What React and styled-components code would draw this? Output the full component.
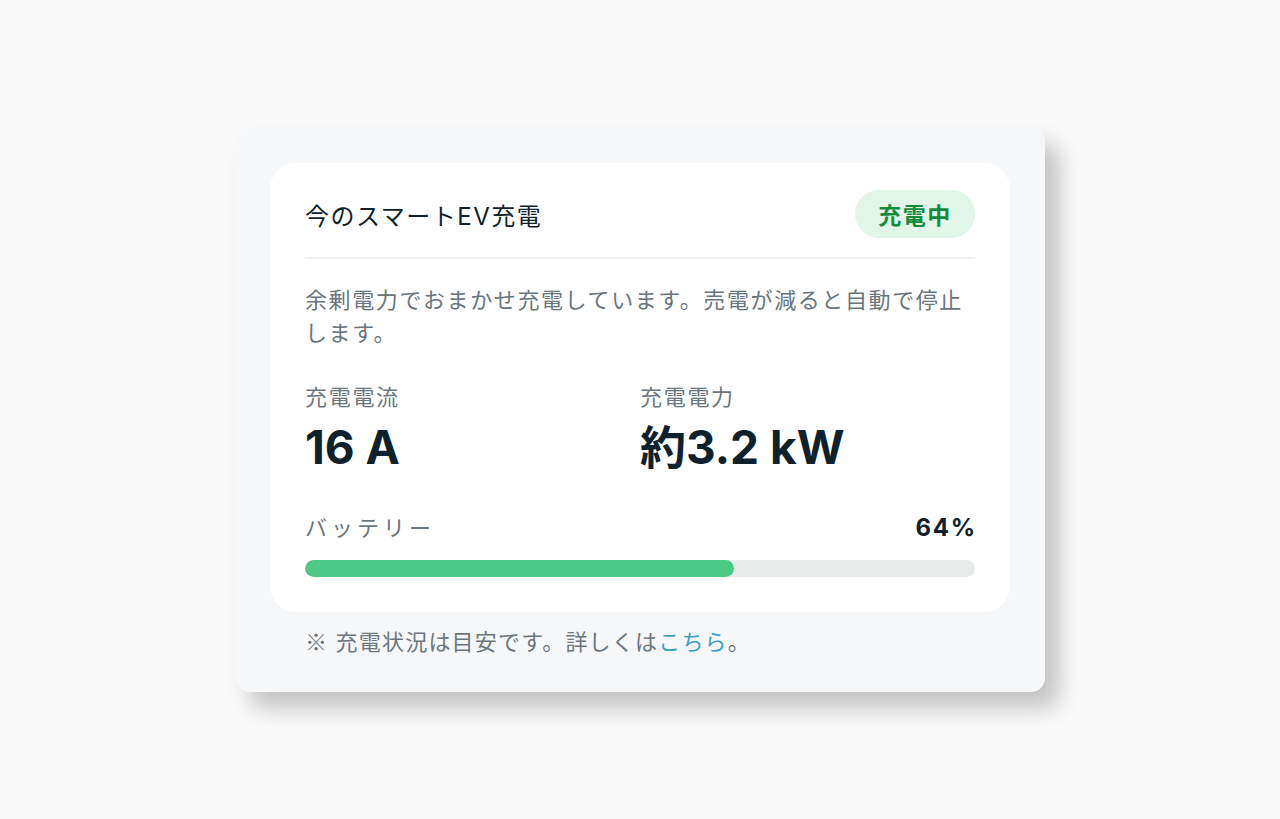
import React from "react";
import styled, { createGlobalStyle } from "styled-components";

const GlobalStyle = createGlobalStyle`
  html, body {
    margin: 0;
    padding: 0;
    background: #f9f9f9;
  }
  body {
    font-family: "Inter", "Noto Sans CJK JP", sans-serif;
  }
`;

const Page = styled.div`
  min-height: 819px;
  display: flex;
  align-items: flex-start;
  justify-content: center;
  padding-top: 128px;
  box-sizing: border-box;
`;

const Outer = styled.div`
  width: 809px;
  box-sizing: border-box;
  padding: 35px 35px 36px 34px;
  background: #f6f7f9;
  border-radius: 14px;
  box-shadow: 14px 16px 22px rgba(0, 0, 0, 0.22);
  margin-left: 1px;
`;

const Card = styled.div`
  background: #ffffff;
  border-radius: 26px;
  padding: 27px 35px 35px;
`;

const Header = styled.div`
  display: flex;
  align-items: center;
  justify-content: space-between;
  padding-bottom: 19px;
  border-bottom: 2px solid #eef0f1;
`;

const Title = styled.h2`
  margin: 0;
  font-size: 24px;
  font-weight: 400;
  color: #10212b;
  letter-spacing: 1.5px;
`;

const Badge = styled.span`
  display: inline-flex;
  align-items: center;
  justify-content: center;
  height: 48px;
  width: 120px;
  border-radius: 24px;
  background: #e1f5e8;
  color: #138a3c;
  font-size: 23px;
  font-weight: 700;
  letter-spacing: 1.5px;
`;

const Description = styled.p`
  margin: 25px 0 0;
  font-size: 22px;
  line-height: 33px;
  color: #69757d;
  letter-spacing: 1.6px;
`;

const Stats = styled.div`
  display: grid;
  grid-template-columns: 1fr 1fr;
  margin-top: 33px;
`;

const Stat = styled.div`
  display: flex;
  flex-direction: column;
`;

const Label = styled.span`
  font-size: 22px;
  line-height: 28px;
  color: #6b767d;
  letter-spacing: ${(p) => (p.$wide ? "4px" : "1.7px")};
`;

const Value = styled.span`
  margin-top: 10px;
  font-size: 46px;
  line-height: 52px;
  font-weight: 700;
  color: #0f212c;
`;

const BatteryRow = styled.div`
  display: flex;
  align-items: center;
  justify-content: space-between;
  margin-top: 41px;
`;

const Percent = styled.span`
  font-size: 24px;
  line-height: 28px;
  font-weight: 700;
  color: #0f212c;
  letter-spacing: 1.8px;
  margin-right: -2px;
`;

const Track = styled.div`
  margin-top: 18px;
  height: 17px;
  border-radius: 9px;
  background: #e9eaea;
  overflow: hidden;
`;

const Fill = styled.div`
  height: 100%;
  border-radius: 9px;
  background: #4cc985;
`;

const Note = styled.p`
  margin: 16px 0 0 35px;
  font-size: 22px;
  line-height: 28px;
  color: #6b767d;
  letter-spacing: 1.2px;
`;

const Mark = styled.span`
  font-family: "Noto Sans CJK JP", sans-serif;
  line-height: 1;
`;

const Link = styled.a`
  color: #3a9fc9;
  text-decoration: none;
`;

export default function App() {
  const battery = 64;
  return (
    <>
      <GlobalStyle />
      <Page>
        <Outer>
          <Card>
            <Header>
              <Title>今のスマートEV充電</Title>
              <Badge>充電中</Badge>
            </Header>
            <Description>
              余剰電力でおまかせ充電しています。売電が減ると自動で停止します。
            </Description>
            <Stats>
              <Stat>
                <Label>充電電流</Label>
                <Value>16 A</Value>
              </Stat>
              <Stat>
                <Label>充電電力</Label>
                <Value>約3.2 kW</Value>
              </Stat>
            </Stats>
            <BatteryRow>
              <Label $wide>バッテリー</Label>
              <Percent>{battery}%</Percent>
            </BatteryRow>
            <Track>
              <Fill style={{ width: `${battery}%` }} />
            </Track>
          </Card>
          <Note>
            <Mark>※</Mark> 充電状況は目安です。詳しくは<Link href="#">こちら</Link>。
          </Note>
        </Outer>
      </Page>
    </>
  );
}
